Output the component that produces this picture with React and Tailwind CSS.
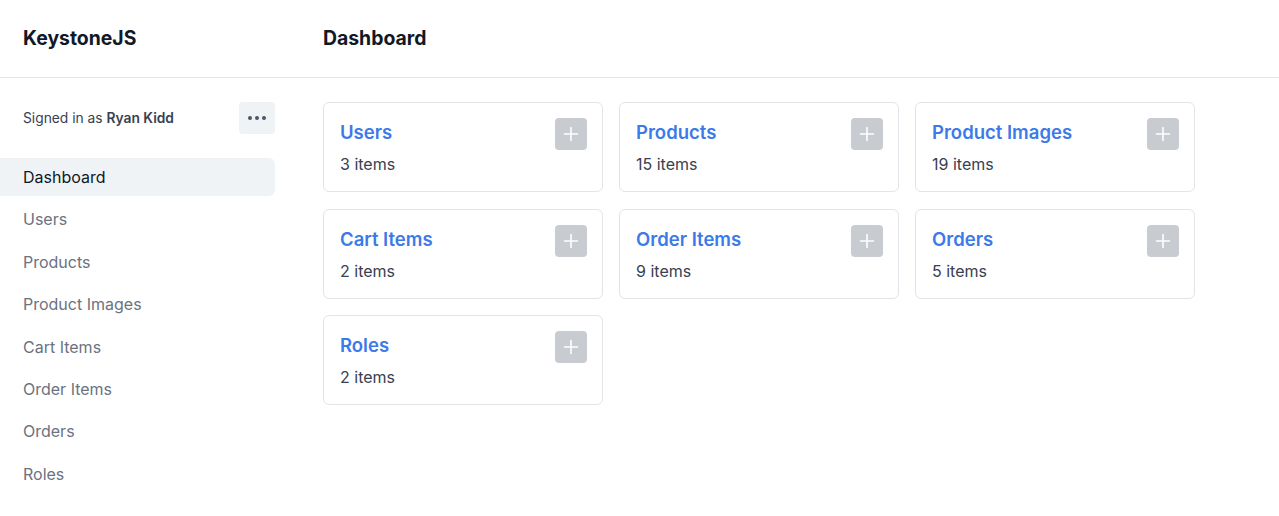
import { useState } from "react";

const lists = [
  { name: "Users", count: 3 },
  { name: "Products", count: 15 },
  { name: "Product Images", count: 19 },
  { name: "Cart Items", count: 2 },
  { name: "Order Items", count: 9 },
  { name: "Orders", count: 5 },
  { name: "Roles", count: 2 },
];

function PlusIcon() {
  return (
    <svg width="16" height="16" viewBox="0 0 16 16" fill="none">
      <path d="M8 1.5v13M1.5 8h13" stroke="white" strokeWidth="1.6" strokeLinecap="round" />
    </svg>
  );
}

export default function App() {
  const [active, setActive] = useState("Dashboard");

  return (
    <div className="min-h-[516px] bg-white text-[#1f2937] font-['Inter','Liberation_Sans',sans-serif]">
      {/* ================= HEADER ================= */}
      <header className="flex h-[78px] items-center border-b border-[#e1e5e9]">
        <div className="w-[299px] pl-[23px] text-[19.4px] font-bold text-[#111827]">KeystoneJS</div>
        <div className="pl-[24px] text-[19.4px] font-bold text-[#111827]">Dashboard</div>
      </header>

      <div className="flex">
        {/* ================= SIDEBAR ================= */}
        <aside className="w-[299px] pt-[24px] pr-[24px]">
          <div className="flex h-[32px] items-center justify-between pl-[23px]">
            <div className="text-[13.8px] text-[#374151]">
              Signed in as <span className="font-semibold text-[#374151]">Ryan Kidd</span>
            </div>
            <button className="flex h-[32px] w-[36px] items-center justify-center gap-[3px] rounded-[4px] bg-[#eff3f6]">
              <span className="h-[4px] w-[4px] rounded-full bg-[#4b5563]" />
              <span className="h-[4px] w-[4px] rounded-full bg-[#4b5563]" />
              <span className="h-[4px] w-[4px] rounded-full bg-[#4b5563]" />
            </button>
          </div>

          <nav className="mt-[24px] flex flex-col gap-[4.4px]">
            {["Dashboard", ...lists.map((l) => l.name)].map((item) => (
              <a
                key={item}
                onClick={() => setActive(item)}
                className={
                  item === active
                    ? "flex h-[38px] cursor-pointer items-center rounded-r-[6px] bg-[#eff3f6] pl-[23px] text-[16px] text-[#111827]"
                    : "flex h-[38px] cursor-pointer items-center pl-[23px] text-[16px] text-[#6b7280]"
                }
              >
                {item}
              </a>
            ))}
          </nav>
        </aside>

        {/* ================= CARDS ================= */}
        <main className="pt-[24px] pl-[24px]">
          <div className="grid grid-cols-[280px_280px_280px] gap-x-[16px] gap-y-[16.5px]">
            {lists.map((list) => (
              <div
                key={list.name}
                className="flex h-[90px] justify-between rounded-[6px] border border-[#e1e5e9] p-[15px] pl-[16px]"
              >
                <div>
                  <div className="mt-[2px] text-[18.5px] font-semibold leading-[24px] text-[#3b7ae8]">
                    {list.name}
                  </div>
                  <div className="mt-[8px] text-[16px] leading-[24px] text-[#374151]">
                    {list.count} items
                  </div>
                </div>
                <button className="flex h-[32px] w-[32px] items-center justify-center rounded-[4px] bg-[#c8cbd0]">
                  <PlusIcon />
                </button>
              </div>
            ))}
          </div>
        </main>
      </div>
    </div>
  );
}
